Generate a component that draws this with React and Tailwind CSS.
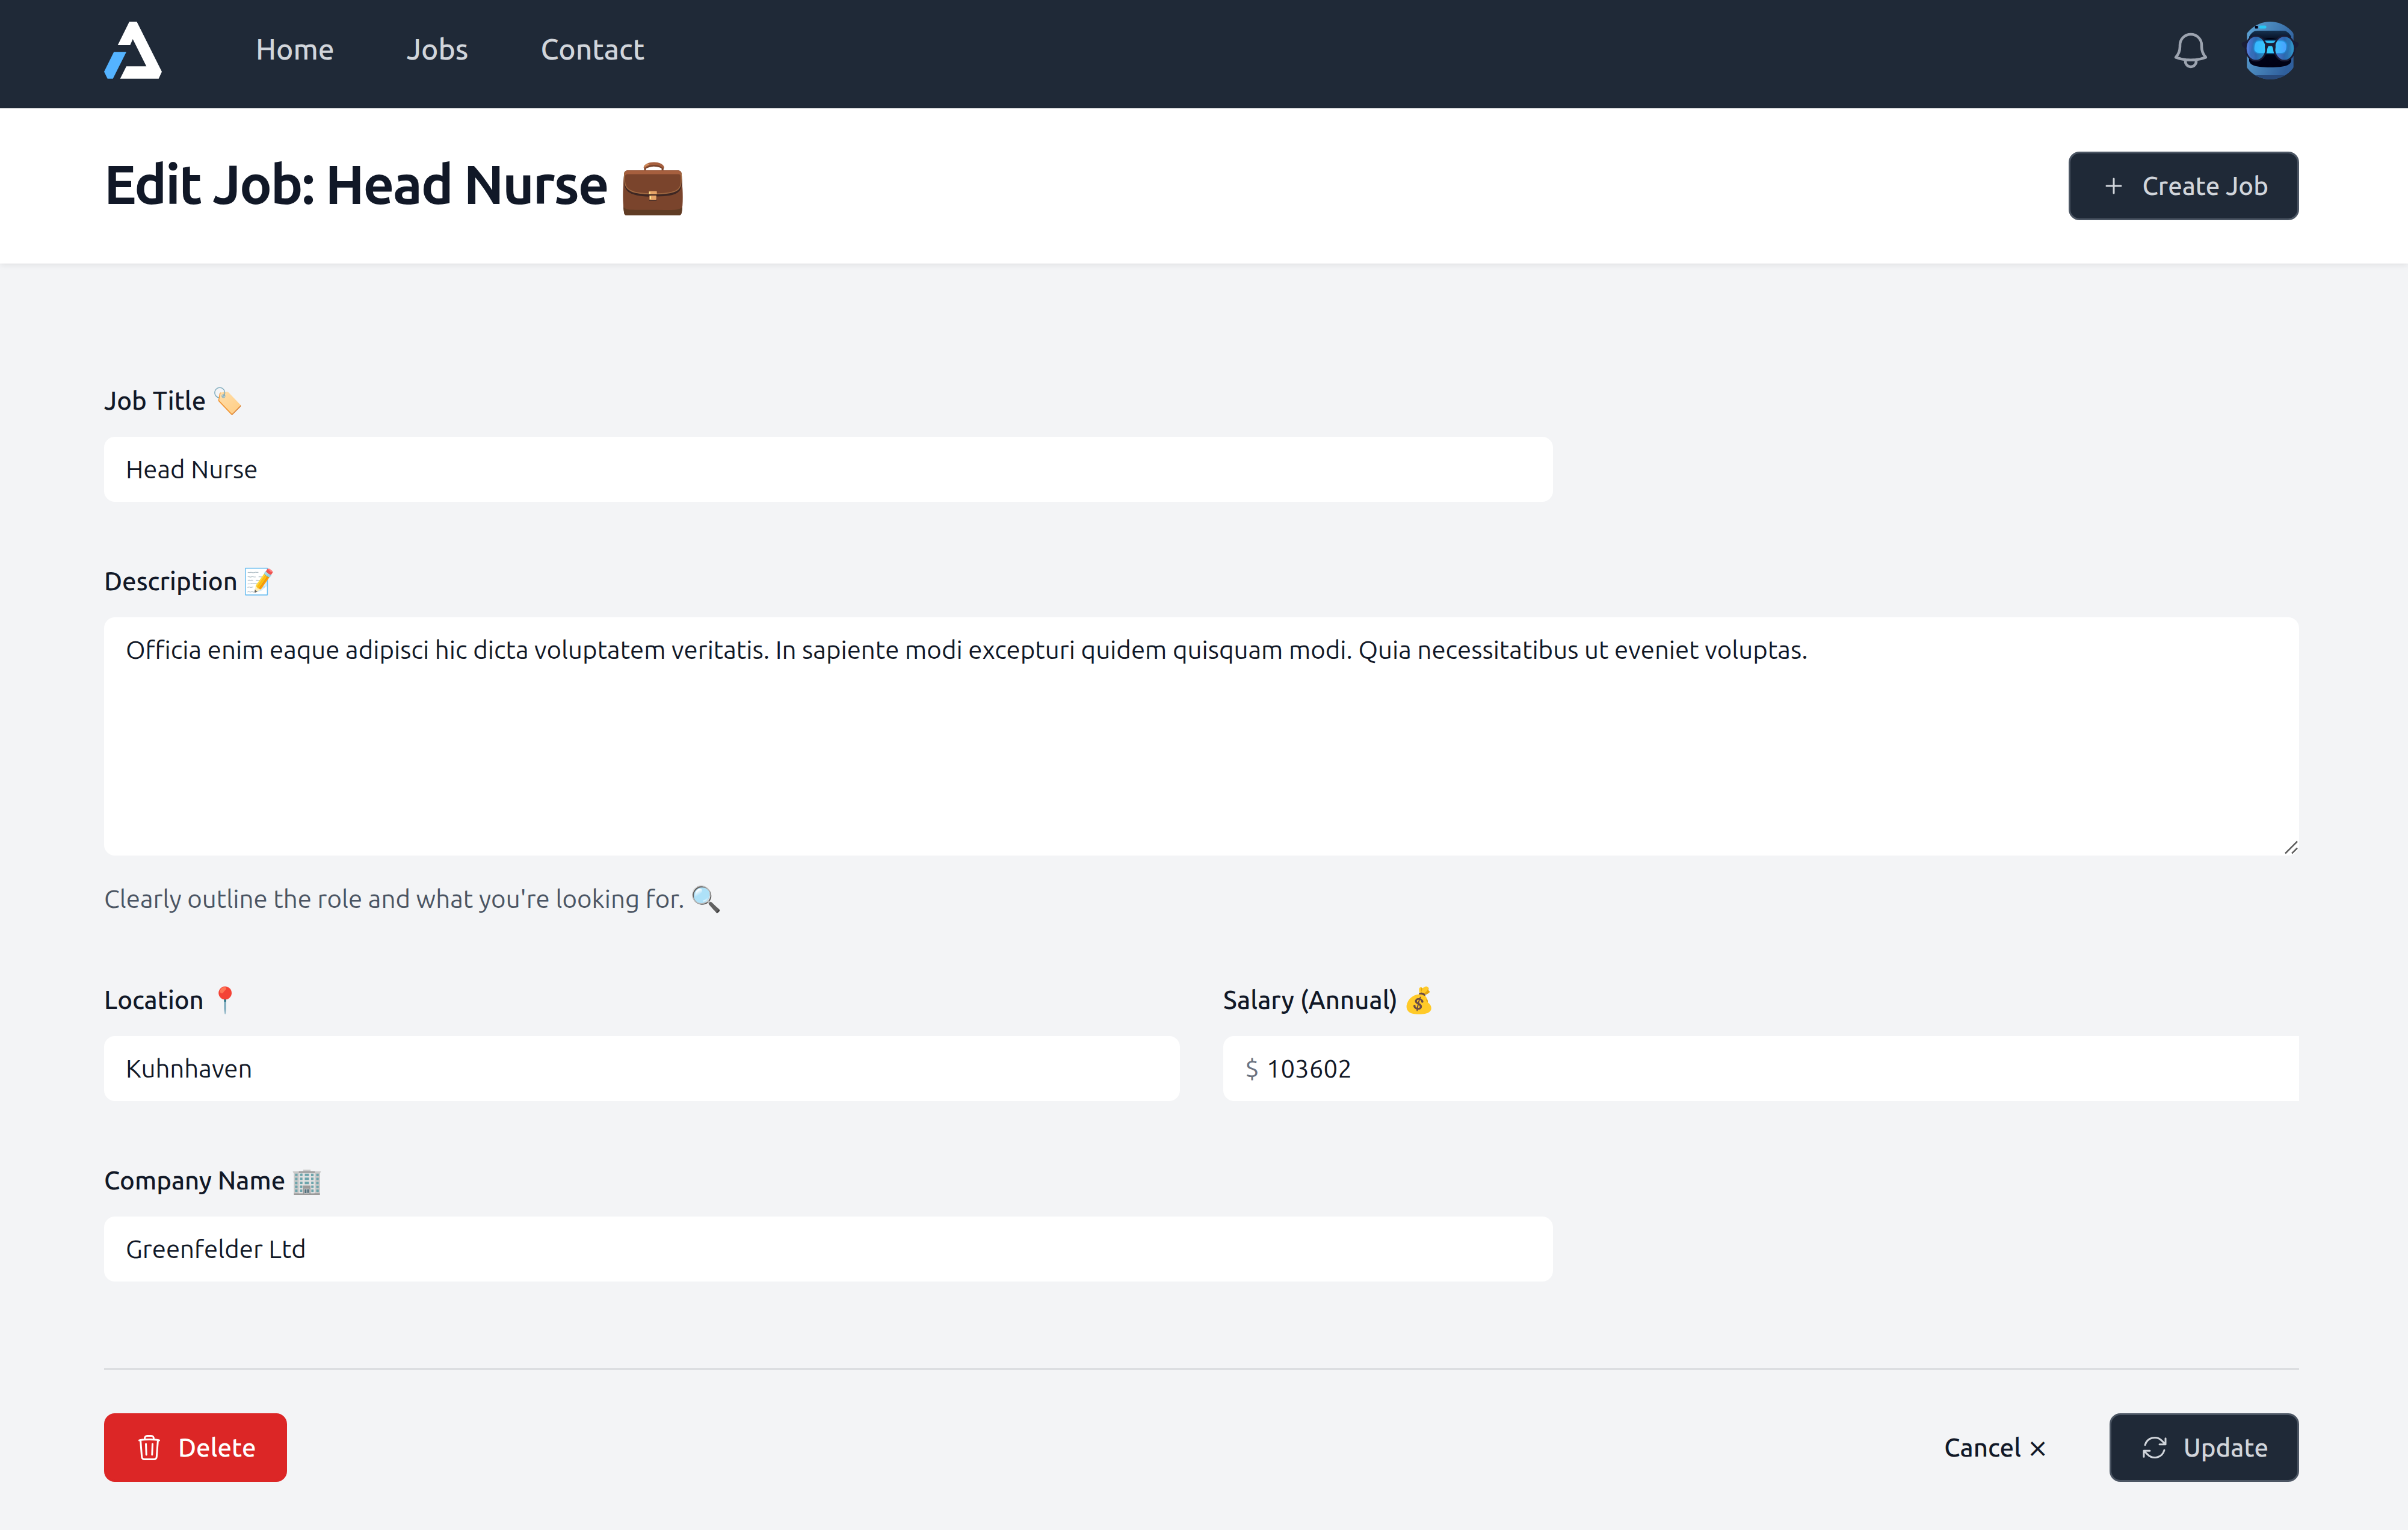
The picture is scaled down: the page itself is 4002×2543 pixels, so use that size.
import React from 'react';

const ICONS = {
  bell: 'M14.857 17.082a23.848 23.848 0 0 0 5.454-1.31A8.967 8.967 0 0 1 18 9.75V9A6 6 0 0 0 6 9v.75a8.967 8.967 0 0 1-2.312 6.022c1.733.64 3.56 1.085 5.455 1.31m5.714 0a24.255 24.255 0 0 1-5.714 0m5.714 0a3 3 0 1 1-5.714 0',
  plus: 'M12 6v12m6-6H6',
  trash:
    'm14.74 9-.346 9m-4.788 0L9.26 9m9.968-3.21c.342.052.682.107 1.022.166m-1.022-.165L18.16 19.673a2.25 2.25 0 0 1-2.244 2.077H8.084a2.25 2.25 0 0 1-2.244-2.077L4.772 5.79m14.456 0a48.108 48.108 0 0 0-3.478-.397m-12 .562c.34-.059.68-.114 1.022-.165m0 0a48.11 48.11 0 0 1 3.478-.397m7.5 0v-.916c0-1.18-.91-2.164-2.09-2.201a51.964 51.964 0 0 0-3.32 0c-1.18.037-2.09 1.022-2.09 2.201v.916m7.5 0a48.667 48.667 0 0 0-7.5 0',
  refresh:
    'M16.023 9.348h4.992v-.001M2.985 19.644v-4.992m0 0h4.992m-4.993 0 3.181 3.183a8.25 8.25 0 0 0 13.803-3.7M4.031 9.865a8.25 8.25 0 0 1 13.803-3.7l3.181 3.182m0-4.991v4.99',
};

function Icon({ name, className }) {
  return (
    <svg
      className={className}
      viewBox="0 0 24 24"
      fill="none"
      stroke="currentColor"
      strokeWidth="1.5"
      strokeLinecap="round"
      strokeLinejoin="round"
      aria-hidden="true"
    >
      <path d={ICONS[name]} />
    </svg>
  );
}

function Logo() {
  return (
    <svg className="size-24" viewBox="0 0 96 96" aria-hidden="true">
      <path
        fill="#ffffff"
        d="M42 0h12.3L96 83.3l-5.3 11.4h-64L37 74.3h33.3L47.7 29l-4.4 10H22.7z"
      />
      <path fill="#54b3ff" d="M16.3 50.3H37L14.7 94.7h-9L0 83.3z" />
    </svg>
  );
}

function Avatar() {
  return (
    <svg className="size-24" viewBox="0 0 96 96" aria-hidden="true">
      <defs>
        <clipPath id="avatar-round">
          <circle cx="48" cy="48" r="48" />
        </clipPath>
        <linearGradient id="avatar-helmet" x1="0" y1="0" x2="1" y2="0.5">
          <stop offset="0" stopColor="#5fa5d6" />
          <stop offset="0.5" stopColor="#4682b8" />
          <stop offset="1" stopColor="#2f5f9c" />
        </linearGradient>
        <linearGradient id="avatar-visor" x1="0" y1="0" x2="0" y2="1">
          <stop offset="0" stopColor="#16324f" />
          <stop offset="0.3" stopColor="#020618" />
          <stop offset="1" stopColor="#000014" />
        </linearGradient>
        <linearGradient id="avatar-eyes" x1="0" y1="0" x2="1" y2="0">
          <stop offset="0" stopColor="#38b6ff" />
          <stop offset="0.5" stopColor="#35cdfb" />
          <stop offset="1" stopColor="#4aa0ff" />
        </linearGradient>
        <linearGradient id="avatar-lens" x1="0" y1="0" x2="1" y2="0">
          <stop offset="0" stopColor="#5a7ee0" />
          <stop offset="0.5" stopColor="#2f6bb5" />
          <stop offset="1" stopColor="#2f9fd0" />
        </linearGradient>
        <filter id="avatar-glow" x="-20%" y="-40%" width="140%" height="180%">
          <feGaussianBlur stdDeviation="1" />
        </filter>
      </defs>
      <g clipPath="url(#avatar-round)">
        <path fill="url(#avatar-helmet)" d="M9.3 0h77.4v96H9.3z" />
        <path fill="#28497a" d="M9.3 89h77.4v7H9.3z" />
        <path
          fill="url(#avatar-visor)"
          d="M27 15h42c6 0 10 3 14 10v39c0 8-10 12-35 12S13 72 13 64V25c4-7 8-10 14-10z"
        />
        <rect x="22.7" y="7" width="5" height="4.4" rx="1" fill="#000014" />
        <rect x="29.5" y="6.5" width="12" height="5" rx="2" fill="#27c8f5" />
        <path fill="#000010" d="M38 30c4-4 16-4 20 0z" />
        <ellipse cx="24.3" cy="44.3" rx="17" ry="20" fill="url(#avatar-lens)" opacity="0.95" />
        <ellipse cx="71.7" cy="44.3" rx="17" ry="20" fill="url(#avatar-lens)" opacity="0.95" />
        <rect x="20" y="31" width="56" height="22" rx="9" fill="#1f9fe8" filter="url(#avatar-glow)" />
        <rect x="21.5" y="32.5" width="53" height="19.5" rx="8" fill="url(#avatar-eyes)" />
        <path fill="#2a6fb4" opacity="0.5" d="M14 55l7-26h4l-7 31zM70 62l9-34h4l-7 34z" />
      </g>
      <g fill="none" stroke="#1b1d36" strokeWidth="2.8">
        <ellipse cx="24.3" cy="44.3" rx="17" ry="20.6" />
        <ellipse cx="71.7" cy="44.3" rx="17" ry="20.6" />
      </g>
      <path
        fill="#1b1d36"
        d="M40 34c5 2 11 2 16 0l1 8-2 14c-2-8-2-14-4.500-15.500h-5C43 42 43 48 41 56l-2-14z"
      />
      <path fill="#1b1d36" d="M9 31c-3 3-6 3-8 4-1 3 1 8 6 9zM87 31c3 3 6 3 8 4 1 3-1 8-6 9z" />
      <path fill="#35cdfb" d="M45 34h6l-3 1z" />
    </svg>
  );
}

const CONTAINER = 'mx-auto max-w-[3840px] px-24';
const BUTTON =
  'flex items-center gap-6 rounded-[18px] border-3 px-12 py-6 text-[42px] leading-[60px] font-medium';
const DARK_BUTTON = 'border-[#4b5563] bg-[#1f2937] text-[#d1d5db]';
const LABEL = 'block text-[42px] leading-[72px] font-medium text-[#111827]';
const INPUT =
  'block w-full rounded-[18px] bg-white px-9 py-[18px] text-[42px] leading-[72px] text-[#111827] outline-none';

function Field({ id, label, value, className }) {
  return (
    <div className={className}>
      <label htmlFor={id} className={LABEL}>
        {label}
      </label>
      <div className="mt-6">
        <input id={id} name={id} type="text" defaultValue={value} className={INPUT} />
      </div>
    </div>
  );
}

export default function App() {
  return (
    <div className="min-h-screen bg-[#f3f4f6] font-['Ubuntu','Noto_Sans','Noto_Color_Emoji',sans-serif]">
      <nav className="bg-[#1f2937] pr-2">
        <div className={CONTAINER}>
          <div className="flex items-center justify-between pt-9 pb-12">
            <div className="flex items-center">
              <a href="#home" aria-label="Home page">
                <Logo />
              </a>
              <div className="ml-30 flex gap-12 pb-1.5 text-[48px] leading-[72px] font-medium text-[#d1d5db]">
                <a href="#home" className="px-9">Home</a>
                <a href="#jobs" className="px-9">Jobs</a>
                <a href="#contact" className="px-9">Contact</a>
              </div>
            </div>
            <div className="flex items-center gap-12">
              <button type="button" aria-label="View notifications" className="text-[#9ca3af]">
                <Icon name="bell" className="size-18" />
              </button>
              <button type="button" aria-label="Open user menu">
                <Avatar />
              </button>
            </div>
          </div>
        </div>
      </nav>

      <header className="relative bg-white pr-2 shadow-[0_3px_9px_rgba(0,0,0,0.07)]">
        <div className={CONTAINER}>
          <div className="flex items-center justify-between py-18">
            <h1 className="pb-1.5 text-[90px] leading-[108px] font-bold tracking-tight text-[#111827]">
              Edit Job: Head Nurse 💼
            </h1>
            <a href="#create" className={`${BUTTON} ${DARK_BUTTON}`}>
              <Icon name="plus" className="size-12" />
              Create Job
            </a>
          </div>
        </div>
      </header>

      <main className="pr-2">
        <form className={`${CONTAINER} pt-48 pb-20`} onSubmit={(e) => e.preventDefault()}>
          <div className="grid grid-cols-6 gap-x-18 gap-y-24 border-b-3 border-[#dcdee1] pb-36">
            <Field id="title" label="Job Title 🏷️" value="Head Nurse" className="col-span-4" />

            <div className="col-span-full">
              <label htmlFor="description" className={LABEL}>
                Description 📝
              </label>
              <div className="relative mt-6">
                <textarea
                  id="description"
                  name="description"
                  rows={5}
                  className={`${INPUT} resize-none`}
                  defaultValue="Officia enim eaque adipisci hic dicta voluptatem veritatis. In sapiente modi excepturi quidem quisquam modi. Quia necessitatibus ut eveniet voluptas."
                />
                <svg
                  className="pointer-events-none absolute right-0 bottom-0 size-7"
                  viewBox="0 0 28 28"
                  stroke="#5c5c5c"
                  strokeWidth="2.5"
                  aria-hidden="true"
                >
                  <path d="M5 24.500L25 4.500M16 24.500l9-9" />
                </svg>
              </div>
              <p className="mt-9 text-[42px] leading-[72px] text-[#4b5563]">
                Clearly outline the role and what you're looking for. 🔍
              </p>
            </div>

            <Field id="location" label="Location 📍" value="Kuhnhaven" className="col-span-3" />

            <div className="col-span-3">
              <label htmlFor="salary" className={LABEL}>
                Salary (Annual) 💰
              </label>
              <div className="mt-6 flex items-center rounded-l-[18px] bg-white pl-9 text-[42px] leading-[72px]">
                <span className="text-[#6b7280]">$</span>
                <input
                  id="salary"
                  name="salary"
                  type="text"
                  defaultValue="103602"
                  className="min-w-0 grow bg-white py-[18px] pr-9 pl-3 text-[#111827] outline-none"
                />
              </div>
            </div>

            <Field
              id="company"
              label="Company Name 🏢"
              value="Greenfelder Ltd"
              className="col-span-4"
            />
          </div>

          <div className="mt-18 flex items-center justify-between">
            <button
              type="button"
              className={`${BUTTON} border-[#dc2626] bg-[#dc2626] text-white`}
            >
              <Icon name="trash" className="size-12" />
              Delete
            </button>
            <div className="flex items-center gap-18">
              <a
                href="#cancel"
                className="px-[30px] text-[42px] leading-[72px] font-medium text-[#111827]"
              >
                Cancel ⨯
              </a>
              <button type="submit" className={`${BUTTON} ${DARK_BUTTON}`}>
                <Icon name="refresh" className="size-12" />
                Update
              </button>
            </div>
          </div>
        </form>
      </main>
    </div>
  );
}
